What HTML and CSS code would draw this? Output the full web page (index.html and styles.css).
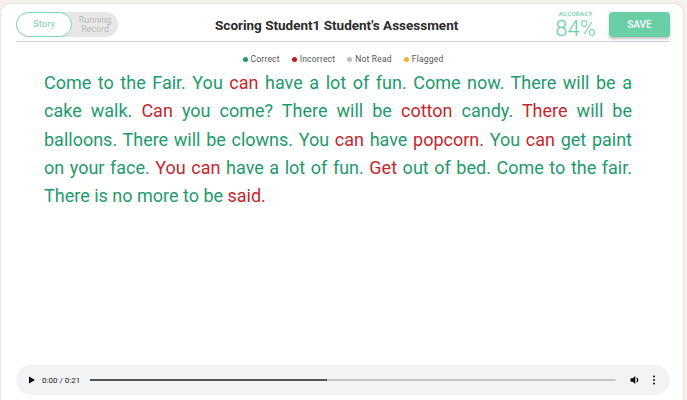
FILE: index.html
```html
<!DOCTYPE html>
<html lang="en">

<head>
    <meta charset="UTF-8">
    <meta name="viewport" content="width=device-width, initial-scale=1.0">
    <title>Scoring Student1 Student's Assessment</title>
    <link rel="stylesheet" href="styles.css">
</head>

<body>

    <div class="card">
        <header class="topbar">
            <div class="toggle">
                <span class="toggle-on">Story</span>
                <span class="toggle-off">Running<br>Record</span>
            </div>
            <h1 class="title">Scoring Student1 Student's Assessment</h1>
            <div class="actions">
                <div class="accuracy">
                    <span class="accuracy-label">ACCURACY</span>
                    <span class="accuracy-value">84%</span>
                </div>
                <button class="save">SAVE</button>
            </div>
        </header>

        <div class="legend">
            <span class="legend-item"><i class="dot correct"></i>Correct</span>
            <span class="legend-item"><i class="dot incorrect"></i>Incorrect</span>
            <span class="legend-item"><i class="dot notread"></i>Not Read</span>
            <span class="legend-item"><i class="dot flagged"></i>Flagged</span>
        </div>

        <div class="passage">
            <div class="line">Come to the Fair. You <span class="wrong">can</span> have a lot of fun. Come now. There will be a</div>
            <div class="line">cake walk. <span class="wrong">Can</span> you come? There will be <span class="wrong">cotton</span> candy. <span class="wrong">There</span> will be</div>
            <div class="line">balloons. There will be clowns. You <span class="wrong">can</span> have <span class="wrong">popcorn.</span> You <span class="wrong">can</span> get paint</div>
            <div class="line">on your face. <span class="wrong">You can</span> have a lot of fun. <span class="wrong">Get</span> out of bed. Come to the fair.</div>
            <div class="line last">There is no more to be <span class="wrong">said.</span></div>
        </div>

        <div class="player">
            <svg class="play" width="8" height="8" viewBox="0 0 8 8"><path d="M1 0.5 L7 4 L1 7.5 Z" fill="#111" /></svg>
            <span class="time">0:00 / 0:21</span>
            <div class="track"><div class="track-done"></div></div>
            <svg class="volume" width="10" height="10" viewBox="0 0 10 10">
                <path d="M0.5 3.3 H2.6 L5.3 1 V9 L2.6 6.7 H0.5 Z" fill="#111" />
                <path d="M6.6 3.2 A2 2 0 0 1 6.6 6.8" fill="none" stroke="#111" stroke-width="1.3" />
            </svg>
            <svg class="more" width="4" height="10" viewBox="0 0 4 10">
                <circle cx="2" cy="1.5" r="1" fill="#111" />
                <circle cx="2" cy="5" r="1" fill="#111" />
                <circle cx="2" cy="8.5" r="1" fill="#111" />
            </svg>
        </div>
    </div>

</body>

</html>
```

FILE: styles.css
```css
body {
    font-family: Roboto, "Liberation Sans", sans-serif;
    margin: 0;
    padding: 0;
    background-color: #f6f1ec;
    overflow: hidden;
}

.card {
    margin: 4px 4px 0 1px;
    height: 396px;
    padding: 0 13px 0 15px;
    background-color: #fff;
    border-radius: 9px 9px 0 0;
    box-shadow: 0 0 3px rgba(0, 0, 0, 0.12);
    display: flex;
    flex-direction: column;
    box-sizing: border-box;
}

.topbar {
    display: flex;
    align-items: center;
    height: 25px;
    padding: 8px 0 4px;
    border-bottom: 1px solid #d2d2da;
}

.toggle {
    display: flex;
    align-items: center;
    width: 102px;
    height: 25px;
    background-color: #e7e7e7;
    border-radius: 13px;
}

.toggle-on {
    width: 56px;
    height: 25px;
    box-sizing: border-box;
    border: 1.5px solid #80d8b6;
    border-radius: 13px;
    background-color: #fff;
    color: #7ad2ad;
    font-size: 9.5px;
    line-height: 22px;
    text-align: center;
}

.toggle-off {
    flex: 1;
    color: #bdbdbd;
    font-size: 9px;
    line-height: 9px;
    text-align: center;
}

.title {
    flex: 1;
    margin: 0;
    text-align: center;
    font-size: 13.5px;
    font-weight: 700;
    color: #2b2b2b;
}

.actions {
    display: flex;
    align-items: center;
    gap: 13px;
}

.accuracy {
    display: flex;
    flex-direction: column;
    align-items: center;
}

.accuracy-label {
    font-size: 6px;
    line-height: 8px;
    font-weight: 700;
    letter-spacing: 0.4px;
    color: #7fd4b1;
}

.accuracy-value {
    font-size: 22px;
    font-weight: 300;
    line-height: 22px;
    color: #6acfa7;
}

.save {
    width: 61px;
    height: 25px;
    border: none;
    border-radius: 4px;
    background-color: #68cfa6;
    color: #fff;
    font-family: inherit;
    font-size: 10px;
    font-weight: 500;
    box-shadow: 0 2px 3px rgba(0, 0, 0, 0.25);
}

.legend {
    display: flex;
    justify-content: center;
    gap: 12px;
    padding-top: 12px;
    font-size: 8.5px;
    color: #555;
    letter-spacing: 0.2px;
}

.legend-item {
    display: flex;
    align-items: center;
    gap: 3px;
}

.dot {
    width: 5px;
    height: 5px;
    border-radius: 50%;
}

.correct {
    background-color: #1d9a6c;
}

.incorrect {
    background-color: #c0161d;
}

.notread {
    background-color: #bdbdbd;
}

.flagged {
    background-color: #e8b530;
}

.passage {
    margin-top: 5px;
    padding: 0 38px 0 28px;
    font-size: 18px;
    line-height: 28.3px;
    color: #1e9a6d;
}

.line {
    text-align: justify;
    text-align-last: justify;
    white-space: nowrap;
}

.line.last {
    text-align-last: left;
}

.wrong {
    color: #c2282d;
}

.player {
    margin-top: auto;
    margin-bottom: 5px;
    height: 30px;
    display: flex;
    align-items: center;
    padding: 0 14px 0 12px;
    background-color: #f1f3f4;
    border-radius: 15px;
}

.time {
    margin-left: 6px;
    font-size: 8px;
    color: #222;
}

.track {
    flex: 1;
    height: 2px;
    margin: 0 14px 0 10px;
    background-color: #c6c6c6;
    border-radius: 1px;
}

.track-done {
    width: 45%;
    height: 2px;
    background-color: #555;
}

.more {
    margin-left: 12px;
}
```
